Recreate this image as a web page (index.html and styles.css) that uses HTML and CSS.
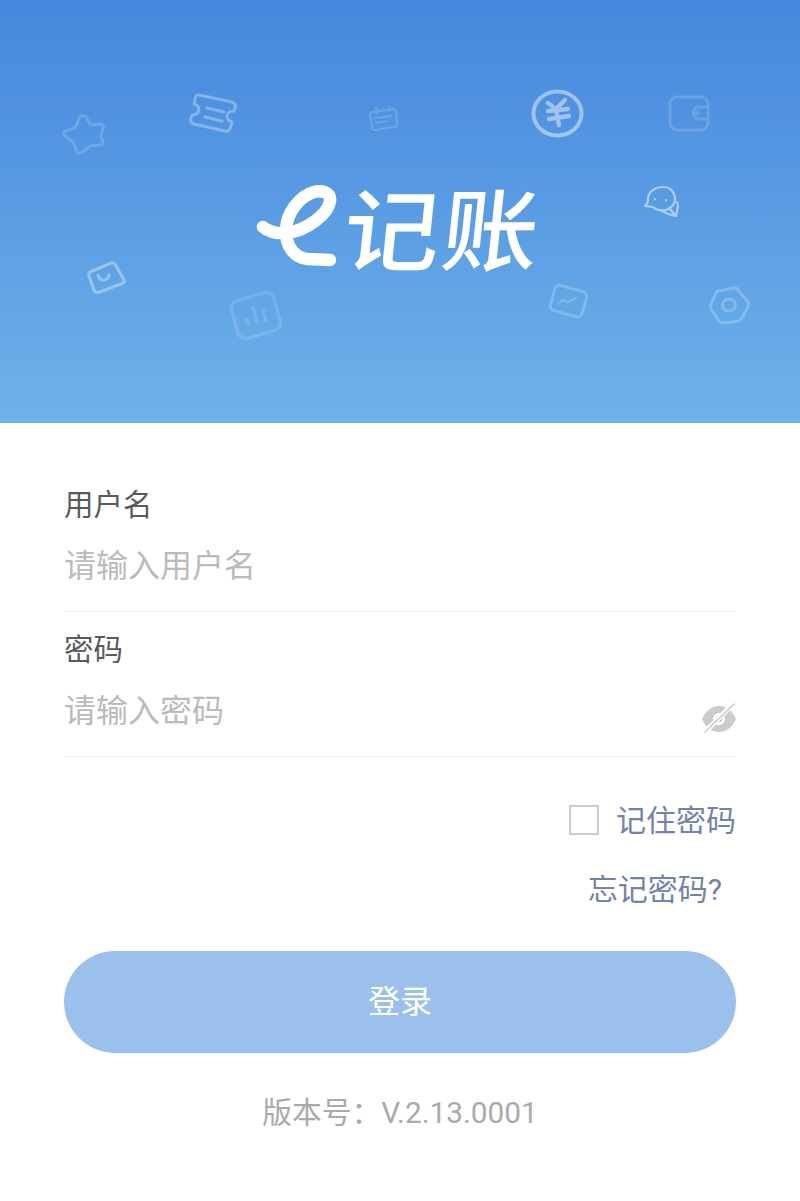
FILE: index.html
```html
<!DOCTYPE html>
<html lang="zh-CN">

<head>
    <meta charset="UTF-8">
    <meta name="viewport" content="width=device-width, initial-scale=1.0">
    <title>e记账</title>
    <link rel="stylesheet" href="styles.css">
</head>

<body>
    <header class="banner">
        <svg class="banner-icons" viewBox="0 0 800 423" fill="none" stroke="#fff" stroke-width="2.5" stroke-linecap="round" stroke-linejoin="round">
            <!-- star -->
            <path opacity=".17" stroke-width="3" d="M80 117c2-2 4-2 6 0l4 7c1 1 2 1 3 1l7-1c3 0 4 2 3 4l-2 8c0 1 0 2 1 3 2 3 1 6-2 6l-9 1c-1 0-2 1-3 2l-6 4c-3 2-5 1-6-2l-2-6c0-1-1-2-2-3l-7-5c-2-2-2-4 1-5l8-3c1 0 2-1 2-2z" />
            <!-- ticket -->
            <g opacity=".3" stroke-width="3">
                <path d="M199 95l33 7c3 1 4 3 3 6l-1 3c-4 0-7 2-7 5s2 5 5 6l-1 4c-1 4-3 6-6 5l-31-7c-3-1-4-3-3-6l1-3c4 0 6-2 7-5 0-3-2-5-5-6l1-4c0-4 2-6 4-5z" />
                <path d="M207 108l17 4M205 117l17 4" />
            </g>
            <!-- calendar -->
            <g opacity=".16" stroke-width="2">
                <path d="M372 112l21-3c2 0 3 1 3 3l1 12c0 2-1 3-3 3l-19 3c-2 0-3-1-3-3l-2-12c0-2 1-3 2-3z" />
                <path d="M376 108l1 5M389 106l1 5M375 118l16-2M376 123l11-2" />
            </g>
            <!-- yen coin -->
            <g opacity=".45" stroke-width="4">
                <ellipse cx="557.5" cy="113.5" rx="24" ry="22" />
                <path stroke-width="4.5" d="M548 103l8 6 9-9M548 111l20-2M549 119l20-3M556 109l3 16" />
            </g>
            <!-- wallet -->
            <g opacity=".14" stroke-width="3">
                <rect x="670" y="97" width="38" height="33" rx="7" />
                <path d="M708 107h-10c-6 0-6 12 0 12h10" />
                <circle cx="697" cy="113" r="1" />
            </g>
            <!-- chat -->
            <g opacity=".5" stroke-width="2.2">
                <path d="M663 187c8 0 12 6 12 12 0 6-4 9-9 11-5 1-10 0-13-3l-8-1c3-2 3-4 3-7 0-7 7-12 15-12z" />
                <path d="M670 209l6 7 2-10c0-2 0-3-2-4M660 210l8 4 8 2" />
                <path d="M655 199v.5M666 200v.5" />
            </g>
            <!-- bag -->
            <g opacity=".35" stroke-width="3">
                <path d="M90 272l21-9c2-1 3 0 4 1l9 16c1 2 0 3-1 3l-23 9c-3 1-5 0-6-2l-5-14c-1-2 0-3 1-4z" />
                <path d="M98 275c1 5 6 7 10 3 1-1 1-2 1-3" />
            </g>
            <!-- chart -->
            <g opacity=".13" stroke-width="3.5">
                <rect x="234" y="296" width="44" height="39" rx="8" transform="rotate(-16 256 316)" />
                <path d="M248 324l-2-5M257 322l-4-14M266 321l-3-11" />
            </g>
            <!-- wave -->
            <g opacity=".2" stroke-width="3">
                <rect x="552" y="288" width="33" height="26" rx="5" transform="rotate(16 568 301)" />
                <path stroke-width="2" d="M559 303c3-2 4-4 6-2s3 2 5 0 3-2 6-3" />
            </g>
            <!-- gear -->
            <g opacity=".22" stroke-width="3">
                <path d="M718 291l16-3c2 0 3 0 4 2l10 12c1 2 1 3 0 5l-6 11c-1 2-2 2-3 3l-16 2c-2 0-3 0-4-2l-8-12c-1-2-1-3 0-5l5-11c0-1 1-2 2-2z" />
                <ellipse cx="729" cy="305" rx="6.5" ry="6" />
            </g>
        </svg>
        <div class="logo">
            <!-- the swoosh of the logo -->
            <svg class="logo-mark" viewBox="0 0 90 90" fill="none" stroke="#fff" stroke-width="12.5" stroke-linecap="round" stroke-linejoin="round">
                <path d="M7 42c6 5 15 7 25 6 18-3 40-18 42-32 1-9-8-11-16-9-14 4-27 20-28 37-1 16 8 29 22 30l22 1" />
            </svg>
            <span class="logo-text">记账</span>
        </div>
    </header>

    <form class="login-form">
        <div class="field">
            <label for="username">用户名</label>
            <input type="text" id="username" placeholder="请输入用户名">
        </div>
        <div class="field">
            <label for="password">密码</label>
            <div class="password-row">
                <input type="password" id="password" placeholder="请输入密码">
                <svg class="eye-icon" viewBox="0 0 34 30">
                    <path fill="#ccc" d="M17 3C9 3 3 9 0 16c3 7 9 13 17 13s14-6 17-13C31 9 25 3 17 3z" />
                    <circle cx="17" cy="16" r="6" fill="#fff" />
                    <circle cx="17" cy="16" r="3.5" fill="#ccc" />
                    <path stroke="#fff" stroke-width="5" d="M32 0L3 29" />
                    <path stroke="#ccc" stroke-width="1.6" stroke-linecap="round" d="M32 1L3 29" />
                </svg>
            </div>
        </div>

        <label class="remember">
            <input type="checkbox">
            <span>记住密码</span>
        </label>
        <a class="forgot" href="#">忘记密码?</a>

        <button class="login-btn" type="button">登录</button>
        <p class="version">版本号：V.2.13.0001</p>
    </form>
</body>

</html>
```

FILE: styles.css
```css
* {
    margin: 0;
    padding: 0;
    box-sizing: border-box;
}

body {
    font-family: Roboto, "Noto Sans CJK SC", sans-serif;
    background: #fff;
}

/* Banner */
.banner {
    position: relative;
    height: 423px;
    padding-top: 37px;
    display: flex;
    align-items: center;
    justify-content: center;
    background: linear-gradient(#4587dd, #6fb2e9);
}

.banner-icons {
    position: absolute;
    top: 0;
    left: 0;
    width: 800px;
    height: 423px;
}

.logo {
    position: relative;
    display: flex;
    align-items: center;
    gap: 5px;
    margin-right: 9px;
}

.logo-mark {
    width: 90px;
    height: 90px;
}

.logo-text {
    margin-bottom: 10px;
    font-family: "Noto Sans CJK SC", sans-serif;
    font-size: 90px;
    line-height: 90px;
    font-weight: 500;
    letter-spacing: 2px;
    color: #fff;
    transform: skewX(-6deg) scaleX(1.07);
}

/* Form */
.login-form {
    padding: 44px 64px 0;
}

.field {
    padding: 15px 0;
    border-bottom: 1px solid #f1f1f1;
}

.field label {
    display: block;
    font-size: 29.5px;
    line-height: 46px;
    color: #5a5a5a;
}

.field input {
    display: block;
    width: 100%;
    height: 60px;
    margin-top: 8px;
    border: 0;
    outline: 0;
    font-family: inherit;
    font-size: 32px;
}

.field input::placeholder {
    color: #bbb;
}

.password-row {
    display: flex;
    align-items: flex-end;
}

.eye-icon {
    flex: none;
    width: 34px;
    height: 30px;
    margin-bottom: 8px;
}

.remember {
    display: flex;
    justify-content: flex-end;
    align-items: center;
    gap: 17px;
    height: 44px;
    margin-top: 41px;
    font-size: 30px;
    color: #7383a8;
}

.remember span {
    margin-bottom: 4px;
}

.remember input {
    appearance: none;
    width: 30px;
    height: 30px;
    border: 2px solid #ccc;
}

.forgot {
    display: block;
    margin-top: 26px;
    padding-right: 14px;
    font-size: 30px;
    line-height: 44px;
    text-align: right;
    text-decoration: none;
    color: #7383a8;
}

.login-btn {
    display: block;
    width: 100%;
    height: 102px;
    margin-top: 39px;
    padding-bottom: 7px;
    border: 0;
    border-radius: 51px;
    background: #9bc0ec;
    color: #fff;
    font-family: inherit;
    font-size: 32px;
}

.version {
    margin-top: 38px;
    font-size: 29.8px;
    line-height: 44px;
    text-align: center;
    color: #aaa;
}
```
